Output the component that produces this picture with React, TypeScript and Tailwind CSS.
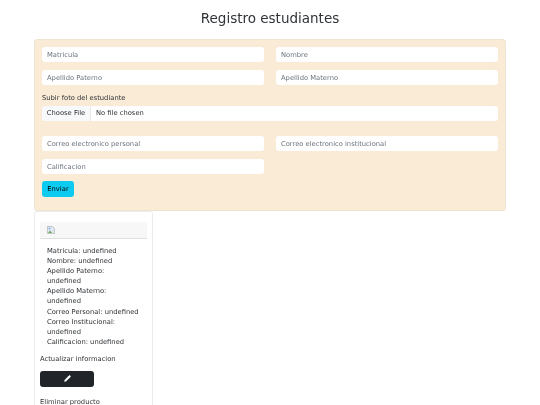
import { Pencil } from 'lucide-react'

const inputClass =
  'h-[15px] w-full rounded-[3px] bg-white px-[5px] text-[6.75px] text-[#212529] outline-none placeholder:text-[#6c757d]'

function Field({ placeholder }: { placeholder: string }) {
  return <input type="text" placeholder={placeholder} className={inputClass} />
}

const details = [
  'Matricula: undefined',
  'Nombre: undefined',
  'Apellido Paterno: undefined',
  'Apellido Materno: undefined',
  'Correo Personal: undefined',
  'Correo Institucional: undefined',
  'Calificacion: undefined',
]

export default function App() {
  return (
    <div className="h-[405px] overflow-hidden bg-white font-['DejaVu_Sans',sans-serif] text-[#2f3337] blur-[0.3px]">
      <h1 className="pt-[9px] text-center text-[13.5px] leading-[18px]">Registro estudiantes</h1>

      <div className="mx-[34px] mt-[12px]">
        <form className="h-[172px] rounded-[3px] border border-[#efe3d2] bg-[#faebd7] px-[7px] pt-[7px]">
          <div className="grid grid-cols-2 gap-x-[12px] gap-y-[8px]">
            <Field placeholder="Matricula" />
            <Field placeholder="Nombre" />
            <Field placeholder="Apellido Paterno" />
            <Field placeholder="Apellido Materno" />
          </div>
          <p className="mt-[8px] text-[6.75px] leading-[10px]">Subir foto del estudiante</p>
          <div className="mt-[3px] flex h-[15px] overflow-hidden rounded-[3px] bg-white text-[6.75px]">
            <span className="flex w-[49px] items-center justify-center border-r border-[#e6e8ea] bg-[#f8f9fa]">
              Choose File
            </span>
            <span className="flex items-center pl-[5px]">No file chosen</span>
          </div>
          <div className="mt-[15px] grid grid-cols-2 gap-x-[12px] gap-y-[8px]">
            <Field placeholder="Correo electronico personal" />
            <Field placeholder="Correo electronico institucional" />
            <Field placeholder="Calificacion" />
          </div>
          <button
            type="button"
            className="mt-[7px] flex h-[16px] w-[32px] items-center justify-center rounded-[3px] bg-[#0dcaf0] text-[6.75px] text-black"
          >
            Enviar
          </button>
        </form>

        <div className="h-[200px] w-[119px] rounded-[3px] border border-[#ebebeb] px-[5px] pt-[10px]">
          <div className="flex h-[17px] items-center border-b border-[#dfdfdf] bg-[#f7f7f7] pl-[7px]">
            <svg width="8" height="8" viewBox="0 0 8 8">
              <path d="M0.5 0.5H5.5L7.5 2.5V7.5H0.5Z" fill="#dfe8f5" stroke="#a8a8a8" strokeWidth="0.6" />
              <path d="M1 7L3 4.5L5 7Z" fill="#6aa84f" />
              <circle cx="2.5" cy="2.5" r="1" fill="#8fb8ea" />
            </svg>
          </div>
          <ul className="w-[100px] pl-[7px] pt-[7px] text-[6.75px] leading-[10.1px]">
            {details.map(line => (
              <li key={line}>{line}</li>
            ))}
          </ul>
          <p className="mt-[7px] text-[6.75px] leading-[10px]">Actualizar informacion</p>
          <button
            type="button"
            className="mt-[7px] flex h-[16px] w-[54px] items-center justify-center rounded-[3px] bg-[#212529] text-white"
          >
            <Pencil size={7} fill="white" />
          </button>
          <p className="mt-[10px] text-[6.75px] leading-[10px]">Eliminar producto</p>
        </div>
      </div>
    </div>
  )
}
